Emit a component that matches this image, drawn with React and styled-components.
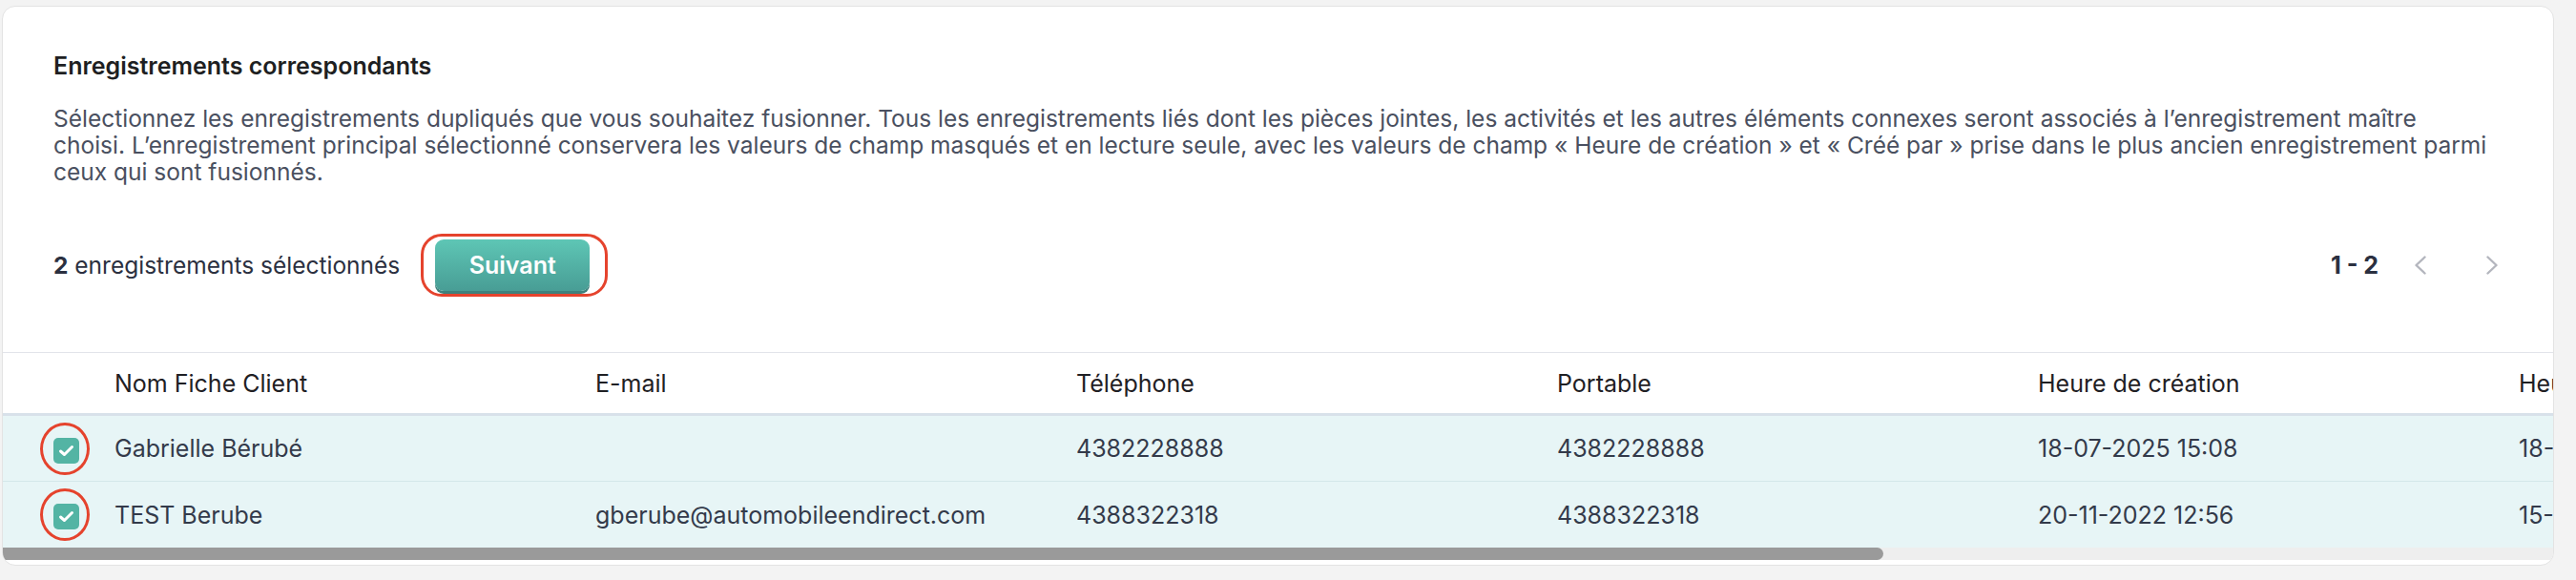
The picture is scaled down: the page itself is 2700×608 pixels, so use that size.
import React from "react";
import styled, { createGlobalStyle, css } from "styled-components";

const GlobalStyle = createGlobalStyle`
  html, body {
    margin: 0;
    padding: 0;
    background: #f3f3f3;
  }
  body {
    font-family: Inter, "Noto Sans", "Liberation Sans", sans-serif;
    -webkit-font-smoothing: antialiased;
  }
`;

const Page = styled.div`
  padding: 6px 23px 15px 2px;
`;

const Card = styled.section`
  background: #ffffff;
  border: 1px solid #e3e3e3;
  border-radius: 14px;
  overflow: hidden;
  padding-bottom: 5px;
`;

const Intro = styled.div`
  padding: 47px 58px 0 53px;
`;

const Title = styled.h2`
  margin: 0;
  font-size: 25px;
  line-height: 30px;
  font-weight: 600;
  color: #1e1f22;
`;

const Description = styled.p`
  margin: 26px 0 0;
  font-size: 24.5px;
  line-height: 28px;
  color: #4a5060;
  white-space: nowrap;
`;

const Toolbar = styled.div`
  display: flex;
  align-items: center;
  margin-top: 55px;
  height: 57px;
`;

const Selected = styled.span`
  font-size: 24.5px;
  color: #2b3040;
  b {
    font-weight: 700;
  }
`;

const Marked = styled.div`
  position: relative;
  margin-left: 37px;
`;

const RedRing = styled.span`
  position: absolute;
  box-sizing: border-box;
  border: 3px solid #e5432d;
  pointer-events: none;
  ${(p) =>
    p.round
      ? css`
          border-radius: 50%;
          left: -14px;
          top: -16px;
          width: 52px;
          height: 55px;
        `
      : css`
          border-radius: 22px;
          left: -15px;
          top: -6px;
          width: 196px;
          height: 66px;
        `}
`;

const NextButton = styled.button`
  display: block;
  width: 162px;
  height: 54px;
  border: none;
  border-radius: 9px;
  background: linear-gradient(180deg, #5ec6b5 0%, #489d95 100%);
  box-shadow: 0 3px 0 #3e817c;
  color: #ffffff;
  font-family: inherit;
  font-size: 25px;
  font-weight: 600;
  cursor: pointer;
`;

const Pager = styled.div`
  margin-left: auto;
  display: flex;
  align-items: center;
`;

const PageInfo = styled.span`
  font-size: 25px;
  font-weight: 700;
  color: #2b3040;
  margin-right: 38px;
`;

const PageArrow = styled.span`
  display: flex;
  width: 12px;
  height: 20px;
  margin-left: ${(p) => (p.gap ? "63px" : "0")};
`;

const Chevron = ({ dir }) => (
  <svg width="12" height="20" viewBox="0 0 12 20">
    <polyline
      points={dir === "left" ? "10.5,1.5 1.5,10 10.5,18.5" : "1.5,1.5 10.5,10 1.5,18.5"}
      fill="none"
      stroke="#b4b6be"
      strokeWidth="2.4"
      strokeLinecap="round"
      strokeLinejoin="round"
    />
  </svg>
);

const TableArea = styled.div`
  margin-top: 63px;
  overflow: hidden;
`;

const Row = styled.div`
  display: grid;
  grid-template-columns: 117px repeat(6, 504px);
  align-items: center;
  font-size: 25px;
  white-space: nowrap;
  ${(p) =>
    p.head
      ? css`
          height: 63px;
          border-top: 1px solid #e2e4ea;
          border-bottom: 3px solid #d8e1ea;
          color: #1f2024;
          background: #ffffff;
        `
      : css`
          height: 69px;
          box-sizing: border-box;
          background: #e7f5f6;
          color: #333a4a;
          border-bottom: ${p.last ? "none" : "1px solid #d3e7e9"};
        `}
`;

const CheckCell = styled.div`
  padding-left: 53px;
  display: flex;
  align-items: center;
`;

const CheckBox = styled.span`
  position: relative;
  width: 27px;
  height: 27px;
  border-radius: 5px;
  background: #53b4a4;
  display: flex;
  align-items: center;
  justify-content: center;
  margin-top: 4px;
`;

const Cell = styled.div`
  overflow: hidden;
`;

const ScrollTrack = styled.div`
  height: 13px;
  background: #eeeeee;
`;

const ScrollThumb = styled.div`
  height: 100%;
  background: #9a9a9a;
  border-radius: 0 7px 7px 0;
`;

const columns = [
  "Nom Fiche Client",
  "E-mail",
  "Téléphone",
  "Portable",
  "Heure de création",
  "Heure de modification",
];

const records = [
  ["Gabrielle Bérubé", "", "4382228888", "4382228888", "18-07-2025 15:08", "18-07-2025 15:08"],
  [
    "TEST Berube",
    "gberube@automobileendirect.com",
    "4388322318",
    "4388322318",
    "20-11-2022 12:56",
    "15-07-2025 10:41",
  ],
];

export default function App() {
  return (
    <>
      <GlobalStyle />
      <Page>
        <Card>
          <Intro>
            <Title>Enregistrements correspondants</Title>
            <Description>
              Sélectionnez les enregistrements dupliqués que vous souhaitez fusionner. Tous les
              enregistrements liés dont les pièces jointes, les activités et les autres éléments
              connexes seront associés à l’enregistrement maître
              <br />
              choisi. L’enregistrement principal sélectionné conservera les valeurs de champ masqués
              et en lecture seule, avec les valeurs de champ « Heure de création » et « Créé par »
              prise dans le plus ancien enregistrement parmi
              <br />
              ceux qui sont fusionnés.
            </Description>
            <Toolbar>
              <Selected>
                <b>2</b> enregistrements sélectionnés
              </Selected>
              <Marked>
                <NextButton>Suivant</NextButton>
                <RedRing />
              </Marked>
              <Pager>
                <PageInfo>1 - 2</PageInfo>
                <PageArrow>
                  <Chevron dir="left" />
                </PageArrow>
                <PageArrow gap>
                  <Chevron dir="right" />
                </PageArrow>
              </Pager>
            </Toolbar>
          </Intro>

          <TableArea>
            <Row head>
              <div />
              {columns.map((c) => (
                <Cell key={c}>{c}</Cell>
              ))}
            </Row>
            {records.map((r, i) => (
              <Row key={r[0]} last={i === records.length - 1}>
                <CheckCell>
                  <CheckBox>
                    <svg width="17" height="13" viewBox="0 0 17 13">
                      <polyline
                        points="2.5,7 6.5,10.5 14.5,2.5"
                        fill="none"
                        stroke="#ffffff"
                        strokeWidth="3"
                        strokeLinecap="round"
                        strokeLinejoin="round"
                      />
                    </svg>
                    <RedRing round />
                  </CheckBox>
                </CheckCell>
                {r.map((v, j) => (
                  <Cell key={j}>{v}</Cell>
                ))}
              </Row>
            ))}
            <ScrollTrack>
              <ScrollThumb style={{ width: `${(1972 / 2674) * 100}%` }} />
            </ScrollTrack>
          </TableArea>
        </Card>
      </Page>
    </>
  );
}
